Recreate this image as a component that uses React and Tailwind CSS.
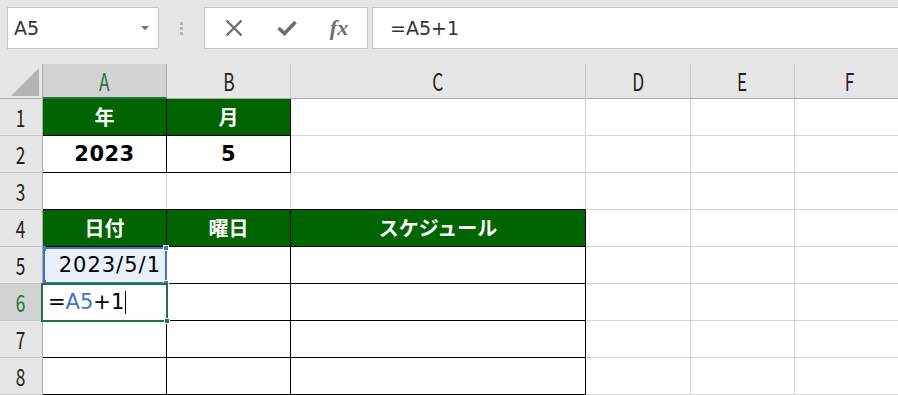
import React from "react";

const COLS = [
  { key: "A", w: 124 },
  { key: "B", w: 124 },
  { key: "C", w: 295 },
  { key: "D", w: 105 },
  { key: "E", w: 104 },
  { key: "F", w: 110 },
];

const LAT = '"DejaVu Sans", "Noto Sans CJK JP", sans-serif';
const JP = '"Noto Sans CJK JP", sans-serif';

const inTable = (r, c) => {
  if (c < 0 || c > 5) return false;
  if ((r === 1 || r === 2) && c <= 1) return true;
  if (r >= 4 && r <= 8 && c <= 2) return true;
  return false;
};

const green = (r, c) => (r === 1 && c <= 1) || (r === 4 && c <= 2);

const content = {
  "1-0": ["年", "jp"],
  "1-1": ["月", "jp"],
  "2-0": ["2023", "lat"],
  "2-1": ["5", "lat"],
  "4-0": ["日付", "jp"],
  "4-1": ["曜日", "jp"],
  "4-2": ["スケジュール", "jp"],
};

function Cell({ r, c, w }) {
  const rightBlack = inTable(r, c) || inTable(r, c + 1);
  const bottomBlack = inTable(r, c) || inTable(r + 1, c);
  const g = green(r, c);
  const item = content[`${r}-${c}`];
  return (
    <div
      className={`relative flex h-[37px] shrink-0 items-center justify-center border-r border-b ${
        rightBlack ? "border-r-black" : "border-r-[#d4d4d4]"
      } ${bottomBlack ? "border-b-black" : "border-b-[#d4d4d4]"} ${
        g ? "bg-[#006400] text-white" : "bg-white text-black"
      }`}
      style={{ width: w }}
    >
      {item && item[1] === "jp" && (
        <span className="text-[20px] font-bold leading-none" style={{ fontFamily: JP }}>
          {item[0]}
        </span>
      )}
      {item && item[1] === "lat" && (
        <span className="text-[21px] font-bold leading-none tracking-[0.5px]" style={{ fontFamily: LAT }}>
          {item[0]}
        </span>
      )}
    </div>
  );
}

function HeadLabel({ children }) {
  return (
    <span
      className="inline-block scale-x-[0.72] text-[24px] leading-none"
      style={{ fontFamily: JP }}
    >
      {children}
    </span>
  );
}

export default function App() {
  const rows = [1, 2, 3, 4, 5, 6, 7, 8];
  return (
    <div
      className="relative h-[395px] w-[898px] overflow-hidden bg-white"
      style={{ fontFamily: LAT }}
    >
      {/* Formula bar */}
      <div className="flex h-[64px] items-start bg-[#e6e6e6] pt-[7px]">
        <div className="ml-[7px] flex h-[42px] w-[152px] items-center justify-between border border-[#c6c6c6] bg-white pl-[6px] pr-[9px]">
          <span className="text-[19px] leading-none text-[#333]">A5</span>
          <svg width="8" height="5" viewBox="0 0 8 5">
            <path d="M0 0 L8 0 L4 4.5 Z" fill="#777" />
          </svg>
        </div>
        <div className="flex h-[42px] w-[45px] flex-col items-center justify-center gap-[2px]">
          <div className="h-[3px] w-[3px] bg-[#b4b4b4]" />
          <div className="h-[3px] w-[3px] bg-[#b4b4b4]" />
          <div className="h-[3px] w-[3px] bg-[#b4b4b4]" />
        </div>
        <div className="flex h-[42px] w-[164px] items-center border border-[#c6c6c6] bg-white">
          <div className="flex w-[56px] justify-center pl-[2px]">
            <svg width="18" height="16" viewBox="0 0 18 16">
              <path d="M1.5 0.5 L16.5 15.5 M16.5 0.5 L1.5 15.5" stroke="#6e6e6e" strokeWidth="2.3" />
            </svg>
          </div>
          <div className="flex w-[52px] justify-center">
            <svg width="20" height="16" viewBox="0 0 20 16">
              <path d="M1.5 8 L7.5 13.5 L18.5 2" stroke="#6e6e6e" strokeWidth="3.6" fill="none" />
            </svg>
          </div>
          <div className="flex w-[52px] justify-center">
            <span
              className="text-[22px] font-bold italic leading-none text-[#6e6e6e]"
              style={{ fontFamily: '"Liberation Serif", "DejaVu Serif", serif' }}
            >
              fx
            </span>
          </div>
        </div>
        <div className="ml-[4px] flex h-[42px] flex-1 items-center border-y border-l border-[#c6c6c6] bg-white pl-[17px]">
          <span className="text-[19px] leading-none text-[#333]">=A5+1</span>
        </div>
      </div>

      {/* Column header */}
      <div className="flex h-[35px]">
        <div className="relative h-[35px] w-[43px] shrink-0 border-r border-b border-[#ababab] bg-[#e6e6e6]">
          <svg className="absolute left-[11px] top-[4px]" width="29" height="28" viewBox="0 0 29 28">
            <path d="M28 0 L28 28 L0 28 Z" fill="#b4b4b4" />
          </svg>
        </div>
        {COLS.map((col, i) => (
          <div
            key={col.key}
            className={`flex h-[35px] shrink-0 items-center justify-center border-r ${
              i === 0
                ? "border-b-2 border-r-[#ababab] border-b-[#217346] bg-[#d2d2d2] text-[#217346]"
                : "border-b border-r-[#c6c6c6] border-b-[#ababab] bg-[#e6e6e6] text-[#222]"
            }`}
            style={{ width: col.w }}
          >
            <HeadLabel>{col.key}</HeadLabel>
          </div>
        ))}
      </div>

      {/* Rows */}
      {rows.map((r) => (
        <div key={r} className="flex">
          <div
            className={`flex h-[37px] w-[43px] shrink-0 items-center justify-center border-r border-b border-b-[#c6c6c6] ${
              r === 6
                ? "border-r-[#217346] bg-[#d2d2d2] text-[#217346]"
                : "border-r-[#ababab] bg-[#e6e6e6] text-[#222]"
            }`}
          >
            <HeadLabel>{r}</HeadLabel>
          </div>
          {COLS.map((col, c) => (
            <Cell key={col.key} r={r} c={c} w={col.w} />
          ))}
        </div>
      ))}

      {/* A5 reference highlight */}
      <div className="absolute left-[43px] top-[247px] flex h-[37px] w-[124px] items-center justify-end border-2 border-[#4472c4] bg-[#e8f0fb] pr-[4px]">
        <span className="text-[21px] leading-none tracking-[1px] text-black">2023/5/1</span>
        <div className="absolute -left-[2px] -top-[3px] h-[5px] w-[3px] bg-[#4472c4]" />
        <div className="absolute -right-[4px] -top-[4px] h-[6px] w-[6px] border border-white bg-[#4472c4]" />
        <div className="absolute -left-[2px] -bottom-[3px] h-[5px] w-[3px] bg-[#4472c4]" />
        <div className="absolute -right-[4px] -bottom-[4px] h-[6px] w-[6px] border border-white bg-[#4472c4]" />
      </div>

      {/* A6 active cell */}
      <div className="absolute left-[41px] top-[283px] flex h-[39px] w-[127px] items-center border-2 border-[#217346] bg-white pl-[5px]">
        <span className="text-[21px] leading-none text-black">=</span>
        <span className="text-[21px] leading-none text-[#4472c4]">A5</span>
        <span className="text-[21px] leading-none text-black">+1</span>
        <span className="ml-[1px] h-[23px] w-px bg-black" />
        <div className="absolute -right-[4px] -bottom-[4px] h-[6px] w-[6px] border border-white bg-[#217346]" />
      </div>
    </div>
  );
}
